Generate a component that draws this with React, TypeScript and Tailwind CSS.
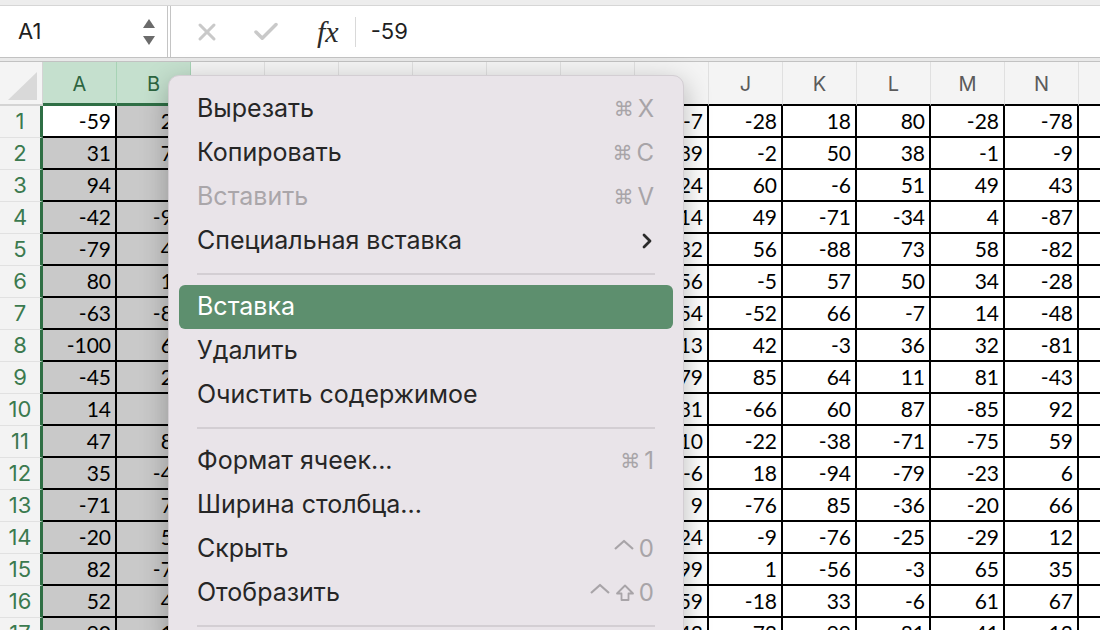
import React from "react";
import { X, Check, ChevronRight } from "lucide-react";

const COLS = ["A", "B", "C", "D", "E", "F", "G", "H", "I", "J", "K", "L", "M", "N", "O"];

// A..N values per row (C..H sit behind the menu)
const ROWS: (number | null)[][] = [
  [-59, 27, 12, -33, 45, -8, 71, -52, -7, -28, 18, 80, -28, -78],
  [31, 74, 5, 61, -17, 22, -90, 38, 39, -2, 50, 38, -1, -9],
  [94, 3, -44, 19, 8, -66, 27, 13, 24, 60, -6, 51, 49, 43],
  [-42, -91, 77, -3, 55, 14, -29, 68, 14, 49, -71, -34, 4, -87],
  [-79, 45, -12, 36, -81, 9, 50, -24, 32, 56, -88, 73, 58, -82],
  [80, 16, 63, -47, 2, 88, -15, 31, 56, -5, 57, 50, 34, -28],
  [-63, -84, 21, 70, -36, 43, -7, 92, 54, -52, 66, -7, 14, -48],
  [-100, 62, -58, 11, 26, -73, 85, -2, 13, 42, -3, 36, 32, -81],
  [-45, 29, 40, -19, 67, 6, -38, 57, 79, 85, 64, 11, 81, -43],
  [14, 8, -26, 53, -9, 34, 18, -61, 31, -66, 60, 87, -85, 92],
  [47, 81, 17, -72, 39, -4, 66, 25, 10, -22, -38, -71, -75, 59],
  [35, -43, -83, 28, 58, 47, -11, 7, -6, 18, -94, -79, -23, 6],
  [-71, 76, 4, -35, -50, 19, 73, -46, 9, -76, 85, -36, -20, 66],
  [-20, 53, 69, 15, -27, -88, 30, 41, 24, -9, -76, -25, -29, 12],
  [82, -72, -31, 48, 13, 60, -54, 20, 99, 1, -56, -3, 65, 35],
  [52, 44, 26, -64, 71, -13, 37, -80, 59, -18, 33, -6, 61, 67],
  [-90, 18, 55, 3, -41, 29, -69, 84, 43, -73, 99, -81, 41, -12],
];

type Item =
  | { sep: true }
  | { label: string; keys?: string[]; disabled?: boolean; submenu?: boolean; active?: boolean };

const MENU: Item[] = [
  { label: "Вырезать", keys: ["⌘", "X"] },
  { label: "Копировать", keys: ["⌘", "C"] },
  { label: "Вставить", keys: ["⌘", "V"], disabled: true },
  { label: "Специальная вставка", submenu: true },
  { sep: true },
  { label: "Вставка", active: true },
  { label: "Удалить" },
  { label: "Очистить содержимое" },
  { sep: true },
  { label: "Формат ячеек...", keys: ["⌘", "1"] },
  { label: "Ширина столбца..." },
  { label: "Скрыть", keys: ["⌃", "0"] },
  { label: "Отобразить", keys: ["⌃", "⇧", "0"] },
  { sep: true },
];

const ui = { fontFamily: "Inter, 'Noto Sans', sans-serif" };
const cellFont = { fontFamily: "Lato, 'Liberation Sans', sans-serif" };

function Key({ k }: { k: string }) {
  if (k === "⌃") {
    return (
      <svg width="22" height="14" viewBox="0 0 22 14" aria-label="⌃" className="mb-[8px]">
        <path d="M2 11 L11 3 L20 11" fill="none" stroke="#a8a4a8" strokeWidth="2.2" strokeLinejoin="round" />
      </svg>
    );
  }
  if (k === "⇧") {
    return (
      <svg width="20" height="20" viewBox="0 0 20 20" aria-label="⇧">
        <path
          d="M10 2.5 L18 10.5 L13.5 10.5 L13.5 17 L6.5 17 L6.5 10.5 L2 10.5 Z"
          fill="none"
          stroke="#a8a4a8"
          strokeWidth="1.8"
          strokeLinejoin="round"
        />
      </svg>
    );
  }
  if (k === "⌘") {
    return (
      <span className="text-[20px]" style={{ fontFamily: "'DejaVu Sans', sans-serif" }}>
        {k}
      </span>
    );
  }
  return <span className="text-[24px]">{k}</span>;
}

function FormulaBar() {
  return (
    <div className="flex h-[51px] bg-white">
      {/* name box */}
      <div className="flex w-[171px] items-center justify-between border-r-[4px] border-double border-[#c4c4c4] pl-[18px] pr-[10px]">
        <span className="text-[22px] text-[#1f1f1f]">A1</span>
        <svg width="16" height="36" viewBox="0 0 16 36">
          <path d="M8 5 L14 14 L2 14 Z" fill="#6b6b6b" />
          <path d="M2 22 L14 22 L8 31 Z" fill="#6b6b6b" />
        </svg>
      </div>
      <div className="flex items-center">
        <div className="flex w-[50px] justify-end">
          <X size={28} strokeWidth={2.6} className="text-[#c9c9c9]" />
        </div>
        <div className="ml-[30px] flex">
          <Check size={30} strokeWidth={2.8} className="text-[#c9c9c9]" />
        </div>
        <div
          className="ml-[36px] text-[30px] italic leading-none text-[#2b2b2b]"
          style={{ fontFamily: "'Liberation Serif', serif" }}
        >
          fx
        </div>
        <div className="ml-[16px] h-[30px] w-px bg-[#d9d9d9]" />
        <span className="ml-[15px] text-[22px] text-[#1f1f1f]">-59</span>
      </div>
    </div>
  );
}

function HeaderRow() {
  return (
    <div className="flex h-[44px] bg-[#f4f4f4]">
      <div className="relative w-[43px] shrink-0 border-r border-b-2 border-[#d4d4d4]">
        <svg className="absolute left-0 top-0" width="43" height="42" viewBox="0 0 43 42">
          <path d="M8 38 L37 38 L37 10 Z" fill="#d9d9d9" />
        </svg>
      </div>
      {COLS.map((c, i) => {
        const sel = i < 2;
        return (
          <div
            key={c}
            className={
              sel
                ? "flex w-[74px] shrink-0 items-center justify-center border-r border-b-[3px] border-r-[#a7d3b5] border-b-[#2f6f45] bg-[#c5e0ce] pt-[2px] text-[20px] text-[#2d6540]"
                : "flex w-[74px] shrink-0 items-center justify-center border-r border-b-2 border-r-[#e0e0e0] border-b-black pt-[2px] text-[20px] text-[#5b5b5b]"
            }
          >
            {c}
          </div>
        );
      })}
    </div>
  );
}

function GridRow({ n, vals }: { n: number; vals: (number | null)[] }) {
  return (
    <div className="flex h-[32px]">
      <div className="flex w-[43px] shrink-0 items-center justify-center border-r-[3px] border-b border-r-[#2f6f45] border-b-[#e1e1e1] bg-[#f3f3f3] text-[22px] text-[#3b7a4f]">
        {n}
      </div>
      {COLS.map((c, i) => {
        const v = i < vals.length ? vals[i] : null;
        const bg = i < 2 && !(n === 1 && i === 0) ? "bg-[#c9c9c9]" : "bg-white";
        return (
          <div
            key={c}
            className={`flex w-[74px] shrink-0 items-center justify-end border-r-2 border-b-2 border-black pr-[4px] text-[21px] tabular-nums text-black ${bg}`}
            style={cellFont}
          >
            {v === null ? "" : v}
          </div>
        );
      })}
    </div>
  );
}

function ContextMenu() {
  return (
    <div
      className="absolute left-[168px] top-[75px] w-[516px] rounded-[11px] border border-[#d3ced3] bg-[#e9e4e9] px-[10px] py-[11px] shadow-[0_8px_28px_rgba(0,0,0,0.28)]"
      style={ui}
    >
      {MENU.map((it, i) => {
        if ("sep" in it) {
          return (
            <div key={i} className="flex h-[22px] items-center px-[18px]">
              <div className="h-[2px] w-full bg-[#d3ced3]" />
            </div>
          );
        }
        const color = it.active ? "text-white" : it.disabled ? "text-[#aaa6aa]" : "text-[#262626]";
        return (
          <div
            key={i}
            className={`flex h-[44px] items-center justify-between rounded-[6px] pl-[18px] pr-[19px] text-[25px] ${color} ${
              it.active ? "bg-[#5d8f6e]" : ""
            }`}
          >
            <span>{it.label}</span>
            {it.keys && (
              <span className="flex items-center gap-[4px] text-[#a8a4a8]">
                {it.keys.map((k, j) => (
                  <Key key={j} k={k} />
                ))}
              </span>
            )}
            {it.submenu && <ChevronRight size={24} strokeWidth={2.8} className="mr-[-5px] text-[#2a2a2a]" />}
          </div>
        );
      })}
    </div>
  );
}

export default function App() {
  return (
    <div className="relative h-[630px] w-[1100px] overflow-hidden bg-white" style={ui}>
      <div className="h-[6px] border-b border-[#d6d6d6] bg-[#ededed]" />
      <FormulaBar />
      <div className="h-[5px] border-y border-[#c2c2c2] bg-[#e9e9e9]" />
      <HeaderRow />
      {ROWS.map((r, i) => (
        <GridRow key={i} n={i + 1} vals={r} />
      ))}
      <ContextMenu />
    </div>
  );
}
